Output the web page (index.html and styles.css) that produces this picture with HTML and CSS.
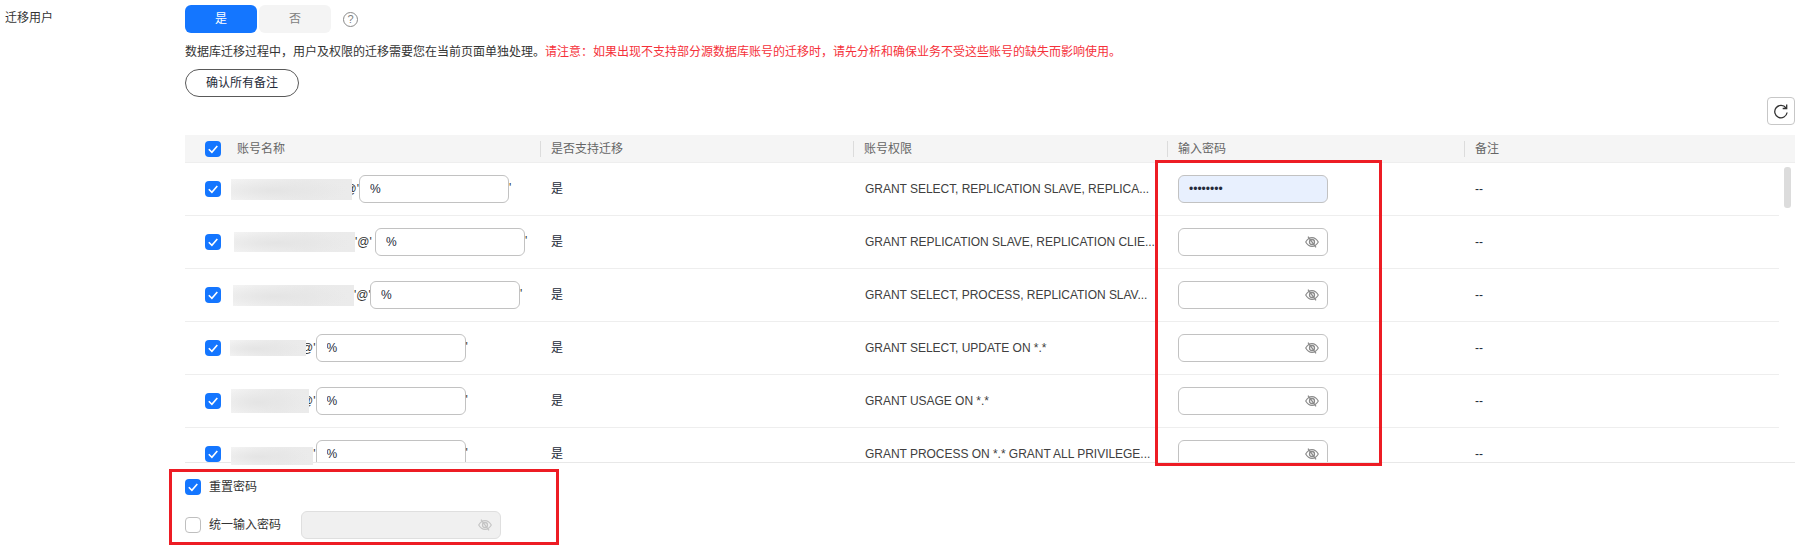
FILE: index.html
```html
<!DOCTYPE html>
<html lang="zh-CN">
<head>
<meta charset="utf-8">
<title>迁移用户</title>
<link rel="stylesheet" href="styles.css">
</head>
<body>
<svg class="defs" width="0" height="0" aria-hidden="true">
  <symbol id="check" viewBox="0 0 16 16"><path d="M3.8 8.3 6.9 11.3 12.3 5" fill="none" stroke="#fff" stroke-width="1.6"/></symbol>
  <symbol id="eye" viewBox="0 0 14 12"><path d="M.7 6C2.400 3 4.500 1.600 7 1.600S11.600 3 13.300 6C11.600 9 9.500 10.400 7 10.400S2.400 9 .7 6Z" fill="none" stroke="currentColor" stroke-width="1.100"/><circle cx="7" cy="6" r="2.500" fill="none" stroke="currentColor" stroke-width="1.300"/><path d="M3 .6 11 11.400" fill="none" stroke="currentColor" stroke-width="1.300"/></symbol>
</svg>
<main class="form-row">
  <div class="form-label">迁移用户</div>
  <div class="form-content">
    <div class="switch-row">
      <div class="seg seg-on">是</div>
      <div class="seg seg-off">否</div>
      <span class="help">?</span>
    </div>
    <p class="desc">数据库迁移过程中，用户及权限的迁移需要您在当前页面单独处理。<span class="warn">请注意：如果出现不支持部分源数据库账号的迁移时，请先分析和确保业务不受这些账号的缺失而影响使用。</span></p>
    <button class="confirm" type="button">确认所有备注</button>
    <div class="toolbar">
      <button class="refresh" type="button" aria-label="刷新">
        <svg width="16" height="16" viewBox="0 0 16 16"><path d="M13 5A6.200 6.200 0 1 0 14.100 9.500" fill="none" stroke="#333" stroke-width="1.300"/><path d="M13.700 1.500V5.500H9.700" fill="none" stroke="#333" stroke-width="1.300"/></svg>
      </button>
    </div>
    <div class="thead">
      <div class="th th-first"><span class="cb cb-on"><svg width="16" height="16"><use href="#check"/></svg></span><span class="th-name">账号名称</span></div>
      <div class="th">是否支持迁移</div>
      <div class="th">账号权限</div>
      <div class="th">输入密码</div>
      <div class="th">备注</div>
    </div>
    <div class="tbody">
      <div class="rows">
        <div class="row">
          <div class="cell-acct"><span class="cb cb-on"><svg width="16" height="16"><use href="#check"/></svg></span><span class="mask m1"></span><span class="at at1">@'</span><input class="txt" value="%"><span class="quote">'</span></div>
          <div class="cell">是</div>
          <div class="cell"><span class="perm">GRANT SELECT, REPLICATION SLAVE, REPLICA...</span></div>
          <div class="cell"><input class="pwd pwd-filled" type="password" value="********"></div>
          <div class="cell">--</div>
        </div>
        <div class="row">
          <div class="cell-acct"><span class="cb cb-on"><svg width="16" height="16"><use href="#check"/></svg></span><span class="mask m2"></span><span class="at at2">'@'</span><input class="txt" value="%"><span class="quote">'</span></div>
          <div class="cell">是</div>
          <div class="cell"><span class="perm">GRANT REPLICATION SLAVE, REPLICATION CLIE...</span></div>
          <div class="cell"><div class="pwd-wrap"><input class="pwd" type="password"><svg class="eye" width="14" height="12"><use href="#eye"/></svg></div></div>
          <div class="cell">--</div>
        </div>
        <div class="row">
          <div class="cell-acct"><span class="cb cb-on"><svg width="16" height="16"><use href="#check"/></svg></span><span class="mask m3"></span><span class="at at3">'@'</span><input class="txt" value="%"><span class="quote">'</span></div>
          <div class="cell">是</div>
          <div class="cell"><span class="perm">GRANT SELECT, PROCESS, REPLICATION SLAV...</span></div>
          <div class="cell"><div class="pwd-wrap"><input class="pwd" type="password"><svg class="eye" width="14" height="12"><use href="#eye"/></svg></div></div>
          <div class="cell">--</div>
        </div>
        <div class="row">
          <div class="cell-acct"><span class="cb cb-on"><svg width="16" height="16"><use href="#check"/></svg></span><span class="mask m4"></span><span class="at at4">@'</span><input class="txt" value="%"><span class="quote">'</span></div>
          <div class="cell">是</div>
          <div class="cell"><span class="perm">GRANT SELECT, UPDATE ON *.*</span></div>
          <div class="cell"><div class="pwd-wrap"><input class="pwd" type="password"><svg class="eye" width="14" height="12"><use href="#eye"/></svg></div></div>
          <div class="cell">--</div>
        </div>
        <div class="row">
          <div class="cell-acct"><span class="cb cb-on"><svg width="16" height="16"><use href="#check"/></svg></span><span class="mask m5"></span><span class="at at5">@'</span><input class="txt" value="%"><span class="quote">'</span></div>
          <div class="cell">是</div>
          <div class="cell"><span class="perm">GRANT USAGE ON *.*</span></div>
          <div class="cell"><div class="pwd-wrap"><input class="pwd" type="password"><svg class="eye" width="14" height="12"><use href="#eye"/></svg></div></div>
          <div class="cell">--</div>
        </div>
        <div class="row">
          <div class="cell-acct"><span class="cb cb-on"><svg width="16" height="16"><use href="#check"/></svg></span><span class="mask m6"></span><span class="at at6">'</span><input class="txt" value="%"><span class="quote">'</span></div>
          <div class="cell">是</div>
          <div class="cell"><span class="perm">GRANT PROCESS ON *.* GRANT ALL PRIVILEGE...</span></div>
          <div class="cell"><div class="pwd-wrap"><input class="pwd" type="password"><svg class="eye" width="14" height="12"><use href="#eye"/></svg></div></div>
          <div class="cell">--</div>
        </div>
      </div>
      <div class="scrollbar"><div class="thumb"></div></div>
    </div>
    <div class="footer">
      <div class="opt"><span class="cb cb-on"><svg width="16" height="16"><use href="#check"/></svg></span><span class="opt-text">重置密码</span></div>
      <div class="opt"><span class="cb cb-off"></span><span class="opt-text opt-wide">统一输入密码</span><div class="pwd-wrap unified"><input class="pwd pwd-disabled" type="password" disabled><svg class="eye eye-dim" width="14" height="12"><use href="#eye"/></svg></div></div>
    </div>
  </div>
</main>
<div class="mark mark-table"></div>
<div class="mark mark-footer"></div>
</body>
</html>
```

FILE: styles.css
```css
* { box-sizing: border-box; }
html, body { margin: 0; padding: 0; }
body {
  position: relative;
  background: #fff;
  color: #252b3a;
  font: 12px/18px "Liberation Sans", "Noto Sans CJK SC", sans-serif;
}
.defs { position: absolute; }
.form-row { display: flex; padding: 5px 16px 17px 0; }
.form-label { width: 185px; padding: 4px 0 0 5px; color: #333; flex: none; }
.form-content { width: 1610px; flex: none; }

.switch-row { display: flex; align-items: center; height: 28px; }
.seg { width: 72px; height: 28px; border-radius: 6px; text-align: center; line-height: 28px; }
.seg-on { background: #1476ff; color: #fff; margin-right: 2px; }
.seg-off { background: #f4f4f4; color: #808080; }
.help {
  width: 15px; height: 15px; margin-left: 12px;
  border: 1px solid #8a8a8a; border-radius: 50%;
  color: #808080; font-size: 11px; line-height: 13px; text-align: center;
}

.desc { margin: 10px 0 0; height: 18px; color: #333; white-space: nowrap; }
.warn { color: #f5313a; }
.confirm {
  display: block; width: 114px; height: 28px; margin-top: 8px; padding: 0;
  background: #fff; border: 1px solid #595959; border-radius: 14px;
  color: #252b3a; font: inherit;
}
.toolbar { display: flex; justify-content: flex-end; margin-top: 0; height: 28px; }
.refresh {
  display: flex; align-items: center; justify-content: center;
  width: 28px; height: 28px; padding: 0;
  background: #fff; border: 1px solid #c7c7c7; border-radius: 4px;
}

.thead, .row { display: grid; grid-template-columns: 355px 313px 314px 297px 1fr; }
.thead {
  margin-top: 10px; height: 28px;
  background: #f5f5f5; color: #666;
  border-bottom: 1px solid #eee;
}
.th { display: flex; align-items: center; padding-left: 11px; position: relative; }
.th:not(.th-first)::before {
  content: ""; position: absolute; left: 0; top: 6px; width: 1px; height: 16px; background: #dcdcdc;
}
.th-first { padding-left: 20px; }
.th-name { margin-left: 16px; }

.cb {
  display: inline-flex; flex: none; width: 16px; height: 16px; border-radius: 4px;
}
.cb-on { background: #1476ff; }
.cb-off { background: #fff; border: 1px solid #bfbfbf; }

.tbody { display: flex; height: 299px; }
.rows { width: 1594px; flex: none; }
.row { height: 53px; border-bottom: 1px solid #eeeeee; color: #252b3a; }
.cell { display: flex; align-items: center; padding-left: 11px; min-width: 0; }
.cell-acct { display: flex; align-items: center; padding-left: 20px; min-width: 0; }
.perm { padding-left: 1px; letter-spacing: -0.03px; white-space: nowrap; color: #404040; }

.mask {
  position: relative; z-index: 2; flex: none;
  background:
    radial-gradient(ellipse 60% 60% at 35% 55%, #e4e4e4 0%, rgba(228,228,228,0) 100%),
    linear-gradient(90deg, #f3f3f3, #eaeaea 60%, #ebebeb);
}
.m1 { width: 121px; height: 21px; margin-left: 10px; }
.m2 { width: 121px; height: 20px; margin-left: 13px; }
.m3 { width: 121px; height: 21px; margin-left: 12px; }
.m4 { width: 76px; height: 16px; margin-left: 9px; }
.m5 { width: 78px; height: 24px; margin-left: 10px; }
.m6 { width: 82px; height: 18px; margin-left: 10px; margin-top: 3px; }
.at { flex: none; white-space: nowrap; color: #333; }
.at2 { width: 20px; }
.at3 { width: 16px; }
.at1, .at4, .at5, .at6 { display: flex; justify-content: flex-end; }
.at1 { width: 7px; }
.at4 { width: 9.500px; }
.at5 { width: 6.500px; }
.at6 { width: 2.500px; }

.txt, .pwd {
  height: 28px; padding: 0 10px; flex: none;
  border: 1px solid #c2c2c2; border-radius: 6px;
  background: #fff; color: #252b3a; font: inherit; outline: none;
}
.txt { width: 150px; }
.quote { margin-top: -3px; color: #333; }
.pwd { width: 150px; }
.pwd-filled { background: #e8f0fe; }
.pwd-wrap { position: relative; width: 150px; height: 28px; }
.eye { position: absolute; right: 9px; top: 8px; color: #8a8a8a; }
.eye-dim { color: #c4c4c4; }

.scrollbar { width: 12px; flex: none; padding: 4px 0 0 5px; }
.thumb { width: 7px; height: 41px; border-radius: 3px; background: #dcdcdc; }

.footer {
  position: relative; z-index: 1; background: #fff;
  border-top: 1px solid #e8e8e8; padding-top: 10px;
}
.opt { display: flex; align-items: center; height: 28px; }
.opt + .opt { margin-top: 10px; }
.opt-text { margin-left: 8px; color: #333; }
.opt-wide { width: 92px; }
.unified { width: 200px; }
.pwd-disabled { width: 100%; background: #f0f0f0; border-color: #dfdfdf; }

.mark { position: absolute; z-index: 3; border: 3px solid #ed1c24; pointer-events: none; }
.mark-table { left: 1155px; top: 160px; width: 227px; height: 306px; }
.mark-footer { left: 169px; top: 469px; width: 390px; height: 76px; }
```
